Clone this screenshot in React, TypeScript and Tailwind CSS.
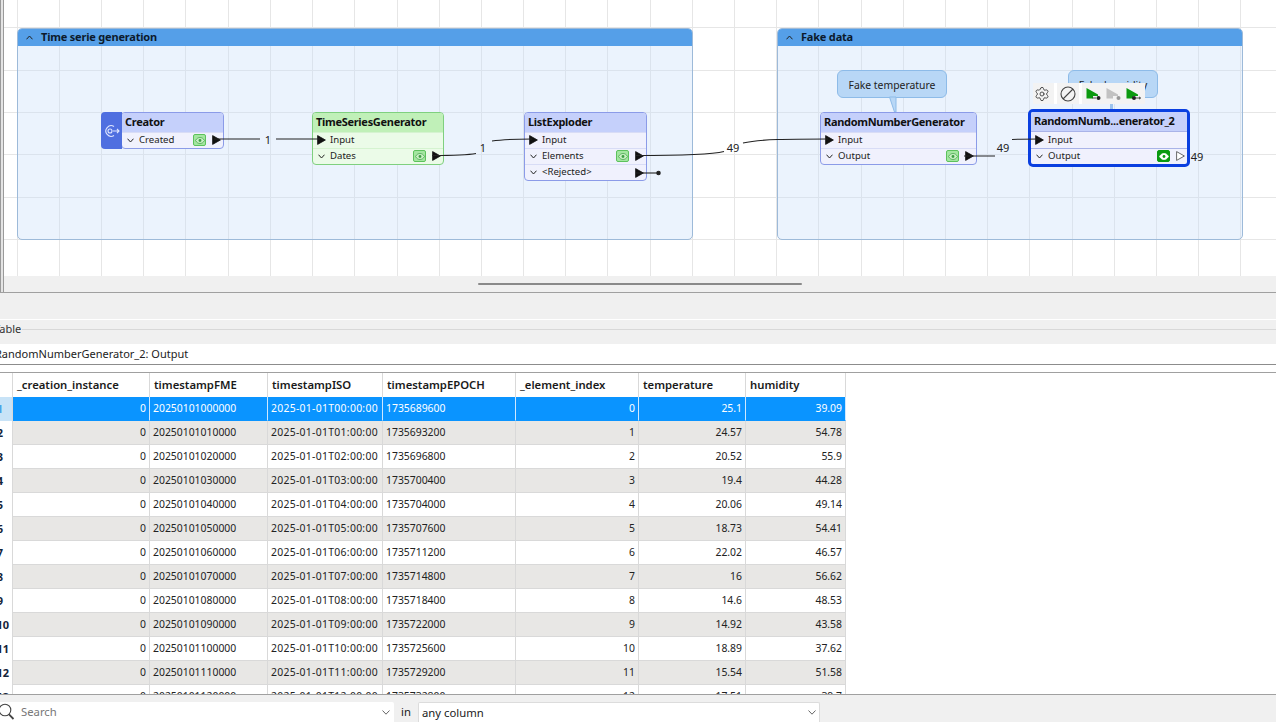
import { Settings } from "lucide-react";

const FONT = "font-['Noto_Sans','Open_Sans',sans-serif]";

const GRID_X = [17, 59, 101, 143, 185, 228, 270, 312, 354, 397, 439, 481, 523, 565, 607, 650, 692, 734, 776, 818, 861, 903, 945, 987, 1029, 1072, 1114, 1156, 1198, 1240];
const GRID_Y = [27, 70, 112, 154, 197, 239];

function Eye({ on }: { on?: boolean }) {
  return (
    <span
      className={`flex h-[12px] w-[13px] items-center justify-center rounded-[2px] border ${
        on ? "border-[#0a9a10] bg-[#0a9a10]" : "border-[#5cc25c] bg-[#a3e6a0]"
      }`}
    >
      <svg width="10" height="7" viewBox="0 0 10 7">
        <path d="M0.5 3.5C2 1 3.5 0.5 5 0.5S8 1 9.5 3.5C8 6 6.5 6.5 5 6.5S2 6 0.5 3.5Z" fill={on ? "#fff" : "#c8f0c4"} stroke={on ? "#fff" : "#3f9f45"} strokeWidth="0.7" />
        <circle cx="5" cy="3.5" r="1.4" fill={on ? "#0a9a10" : "#3f9f45"} />
      </svg>
    </span>
  );
}

function Tri({ hollow }: { hollow?: boolean }) {
  return (
    <svg width="9" height="10" viewBox="0 0 9 10" className="shrink-0">
      <path d="M0.6 0.6L8.4 5L0.6 9.4Z" fill={hollow ? "#fff" : "#111"} stroke={hollow ? "#444" : "#111"} strokeWidth="0.8" />
    </svg>
  );
}

function Chevron({ up }: { up?: boolean }) {
  return (
    <svg width="7" height="5" viewBox="0 0 7 5" className="shrink-0">
      <path d={up ? "M0.5 4.3L3.5 1L6.5 4.3" : "M0.5 0.7L3.5 4L6.5 0.7"} fill="none" stroke="#222" strokeWidth="1" />
    </svg>
  );
}

type Port = { name: string; kind: "input" | "output"; eye?: boolean; on?: boolean; hollow?: boolean };

function Node({
  title,
  x,
  y,
  w,
  ports,
  green,
  selected,
}: {
  title: string;
  x: number;
  y: number;
  w: number;
  ports: Port[];
  green?: boolean;
  selected?: boolean;
}) {
  const border = selected ? "rounded-[5px] border-[3px] border-[#0a3fe0]" : green ? "rounded-[4px] border border-[#7fd07f]" : "rounded-[4px] border border-[#8b9be8]";
  const head = green ? "bg-[#c0f0b8]" : "bg-[#c5d0fb]";
  const body = green ? "bg-[#ebfbe8]" : "bg-[#f0f1fd]";
  const line = green ? "border-[#d5f3d0]" : selected ? "border-[#a9b3e8]" : "border-[#d8dcf6]";
  return (
    <div className={`absolute overflow-hidden ${border} ${body}`} style={{ left: x, top: y, width: w }}>
      <div className={`flex h-[19px] items-center pl-[3px] text-[11px] font-bold tracking-[-0.3px] text-[#111] ${head}`}>{title}</div>
      {ports.map((p, i) => (
        <div
          key={p.name}
          className={`flex items-center border-t text-[9.6px] text-[#222] ${selected ? "h-[16.5px]" : "h-[16px]"} ${!selected && i < 2 ? "pb-px" : ""} ${line}`}
        >
          {p.kind === "input" ? (
            <span className="ml-[4px] flex items-center gap-[4px]">
              <Tri />
              <span>{p.name}</span>
            </span>
          ) : (
            <span className="ml-[5px] flex items-center gap-[5px]">
              <Chevron />
              <span>{p.name}</span>
            </span>
          )}
          {p.kind === "output" && (
            <span className="ml-auto mr-[2px] flex items-center gap-[6px]">
              {p.eye && <Eye on={p.on} />}
              <Tri hollow={p.hollow} />
            </span>
          )}
        </div>
      ))}
    </div>
  );
}

function Bookmark({ title, x, y, w, h }: { title: string; x: number; y: number; w: number; h: number }) {
  return (
    <div
      className="absolute overflow-hidden rounded-[5px] border border-[#9dbad9] bg-[#c6ddf9]/35"
      style={{ left: x, top: y, width: w, height: h }}
    >
      <div className="flex h-[17px] items-center gap-[8px] bg-[#559fe8] pl-[8px] text-[11px] font-bold tracking-[-0.2px] text-[#0c1a2c]">
        <Chevron up />
        {title}
      </div>
    </div>
  );
}

function Annotation({ text, x, y, w }: { text: string; x: number; y: number; w: number }) {
  return (
    <div
      className="absolute flex h-[28px] items-center justify-center overflow-hidden rounded-[6px] border border-[#8dbbe8] bg-[#b8d7f6] pt-[3px] text-[10.4px] text-[#222]"
      style={{ left: x, top: y, width: w }}
    >
      {text}
    </div>
  );
}

function Wires() {
  return (
    <svg className="absolute left-0 top-0" width="1276" height="276" fill="none" stroke="#222" strokeWidth="1.1">
      <path d="M214 139H260M276 139H320" />
      <path d="M432 155.5C455 155.5 468 155 476 153.5M492 141C505 139 515 139 532 139" />
      <path d="M636 155.5C680 155.5 710 155 724 151.5M743 143C760 139 790 139 828 139" />
      <path d="M964 156H995M1012 139.5C1020 139 1030 139 1040 139" />
      <path d="M636 173H658" />
      <circle cx="658.5" cy="173" r="1.7" fill="#222" />
    </svg>
  );
}

function Tails() {
  return (
    <svg className="absolute left-0 top-0" width="1276" height="276">
      <path d="M889.5 97L894.5 112H896V97Z" fill="#b8d7f6" stroke="#8dbbe8" />
      <path d="M1110 104H1113V110H1110Z" fill="#9cc3ee" />
    </svg>
  );
}

function WireLabel({ text, x, y }: { text: string; x: number; y: number }) {
  return (
    <span className="absolute -translate-x-1/2 -translate-y-1/2 text-[11px] leading-none text-[#222]" style={{ left: x, top: y }}>
      {text}
    </span>
  );
}

function RunIcon({ variant, className }: { variant: "out" | "off" | "in"; className: string }) {
  const fill = variant === "off" ? "#c2c2c2" : "#0c9a10";
  const dark = variant === "off" ? "#999" : "#222";
  return (
    <svg width="15" height="12" viewBox="0 0 15 12" className={className}>
      <path d="M0.5 0L12 6.5V8H7V10.5H0.5Z" fill={fill} />
      {variant === "out" && (
        <>
          <path d="M6.5 10H10" stroke={dark} strokeWidth="0.8" />
          <circle cx="12.5" cy="10" r="2" fill={dark} />
        </>
      )}
      {variant === "off" && <circle cx="12.5" cy="10" r="2" fill={dark} />}
      {variant === "in" && (
        <>
          <circle cx="8" cy="10" r="2" fill={dark} />
          <path d="M10 10H14.5M13 8.8L14.5 10L13 11.2" stroke={dark} strokeWidth="0.8" fill="none" />
        </>
      )}
    </svg>
  );
}

function Toolbar() {
  return (
    <div className="absolute flex h-[21px] items-center bg-[#f3f3f3]" style={{ left: 1033, top: 83, width: 112 }}>
      <Settings size={16} strokeWidth={1.4} color="#444" className="ml-[1px]" />
      <span className="ml-[4px] h-[21px] w-[3px] bg-white" />
      <svg width="16" height="16" viewBox="0 0 16 16" fill="none" stroke="#444" strokeWidth="1.1" className="ml-[3px]">
        <circle cx="8" cy="8" r="7" />
        <path d="M3 13L13 3" />
      </svg>
      <span className="ml-[3px] h-[21px] w-[3px] bg-white" />
      <RunIcon variant="out" className="ml-[4px]" />
      <RunIcon variant="off" className="ml-[5px]" />
      <RunIcon variant="in" className="ml-[5px]" />
    </div>
  );
}

const COLUMNS = [
  { name: "_creation_instance", w: 137, right: true },
  { name: "timestampFME", w: 118 },
  { name: "timestampISO", w: 115 },
  { name: "timestampEPOCH", w: 133 },
  { name: "_element_index", w: 123, right: true },
  { name: "temperature", w: 107, right: true },
  { name: "humidity", w: 100, right: true },
];

const MEASURES = [
  ["25.1", "39.09"],
  ["24.57", "54.78"],
  ["20.52", "55.9"],
  ["19.4", "44.28"],
  ["20.06", "49.14"],
  ["18.73", "54.41"],
  ["22.02", "46.57"],
  ["16", "56.62"],
  ["14.6", "48.53"],
  ["14.92", "43.58"],
  ["18.89", "37.62"],
  ["15.54", "51.58"],
  ["17.51", "39.7"],
];

const pad = (n: number) => String(n).padStart(2, "0");

function DataTable() {
  return (
    <div className="h-[321px] overflow-hidden bg-white">
      <div className="flex h-[24px]">
        <div className="w-[13px] shrink-0 border-r border-[#d9d9d9]" />
        {COLUMNS.map((c) => (
          <div
            key={c.name}
            className="flex shrink-0 items-center border-r border-[#d9d9d9] pl-[4px] text-[11.3px] font-semibold text-[#1a1a1a]"
            style={{ width: c.w }}
          >
            {c.name}
          </div>
        ))}
      </div>
      {MEASURES.map(([temp, hum], i) => {
        const values = [
          "0",
          `20250101${pad(i)}0000`,
          `2025-01-01T${pad(i)}:00:00`,
          String(1735689600 + i * 3600),
          String(i),
          temp,
          hum,
        ];
        const selected = i === 0;
        return (
          <div key={i} className="flex h-[24px]">
            <div
              className={`flex w-[13px] shrink-0 items-center justify-end overflow-hidden border-r border-[#d9d9d9] text-[11px] font-bold ${
                i + 1 < 10 ? "pr-[9px]" : "pr-[3px]"
              } ${selected ? "bg-[#c8e3f7] text-[#4ba3e8]" : "bg-white text-[#14243a]"}`}
            >
              <span>{i + 1}</span>
            </div>
            {COLUMNS.map((c, j) => (
              <div
                key={c.name}
                className={`flex shrink-0 items-center whitespace-nowrap border-b border-r px-[3px] text-[10.4px] ${c.right ? "justify-end" : ""} ${
                  j === 2 ? "tracking-[0.3px]" : ""
                } ${
                  selected
                    ? "border-b-[#0a94ff] border-r-[#cfe8ff] bg-[#0a94ff] text-white"
                    : `border-[#d9d9d9] text-[#222] ${i % 2 === 1 ? "bg-[#e8e7e5]" : "bg-white"}`
                }`}
                style={{ width: c.w }}
              >
                {values[j]}
              </div>
            ))}
          </div>
        );
      })}
    </div>
  );
}

function Caret() {
  return (
    <svg width="8" height="5" viewBox="0 0 8 5" className="shrink-0">
      <path d="M0.5 0.5L4 4.2L7.5 0.5" fill="none" stroke="#666" strokeWidth="1" />
    </svg>
  );
}

function SearchBar() {
  return (
    <div className="flex h-[28px] items-end border-t border-[#a0a0a0] bg-[#f0f0f0] text-[11.3px]">
      <div className="flex h-[20px] w-[394px] items-center rounded-tr-[2px] bg-white pr-[4px]">
        <svg width="18" height="18" viewBox="0 0 18 18" fill="none" stroke="#444" strokeWidth="1.1" className="-ml-[2px] shrink-0">
          <circle cx="7" cy="7" r="5.8" />
          <path d="M11 11.4L15.5 16" strokeWidth="1.8" />
        </svg>
        <span className="ml-[5px] pt-px text-[#777]">Search</span>
        <span className="ml-auto flex">
          <Caret />
        </span>
      </div>
      <span className="flex h-[20px] w-[24px] items-center justify-center pt-px text-[#222]">in</span>
      <div className="flex h-[20px] w-[402px] items-center rounded-t-[2px] border-x border-t border-[#dcdcdc] bg-white pl-[3px] pr-[3px] text-[#222]">
        <span className="pt-px">any column</span>
        <span className="ml-auto flex">
          <Caret />
        </span>
      </div>
    </div>
  );
}

export default function App() {
  return (
    <div className={`flex h-[722px] w-[1276px] flex-col overflow-hidden bg-[#f0f0f0] ${FONT}`}>
      <div className="flex h-[293px] shrink-0 border-b border-[#a0a0a0]">
        <div className="w-[4px] shrink-0 border-x border-[#9a9a9a] bg-[#e4e4e4]" />
        <div className="flex min-w-0 flex-1 flex-col">
          <div className="relative h-[276px] overflow-hidden bg-white">
            <div className="absolute -left-[4px] top-0 h-[276px] w-[1276px]">
              {GRID_X.map((x) => (
                <div key={x} className="absolute top-0 h-[276px] w-px bg-[#e6e6e6]" style={{ left: x }} />
              ))}
              {GRID_Y.map((y) => (
                <div key={y} className="absolute left-0 h-px w-[1276px] bg-[#e6e6e6]" style={{ top: y }} />
              ))}
              <Bookmark title="Time serie generation" x={17} y={28} w={676} h={212} />
              <Bookmark title="Fake data" x={777} y={28} w={466} h={212} />
              <Annotation text="Fake temperature" x={837} y={70} w={110} />
              <Annotation text="Fake humidity" x={1068} y={70} w={90} />
              <Tails />
              <Node title="Creator" x={121} y={112} w={103} ports={[{ name: "Created", kind: "output", eye: true }]} />
              <div className="absolute flex h-[37px] w-[21px] items-center justify-center rounded-l-[4px] bg-[#4f6fe0]" style={{ left: 101, top: 112 }}>
                <svg width="16" height="14" viewBox="0 0 16 14" fill="none" stroke="#dfe6ff" strokeWidth="1.1">
                  <path d="M10 2.5A5.3 5.3 0 1 0 10 11.5" />
                  <circle cx="6" cy="7" r="2" />
                  <path d="M9 7H15M13 5L15 7L13 9" />
                </svg>
              </div>
              <Node
                title="TimeSeriesGenerator"
                x={312}
                y={112}
                w={132}
                green
                ports={[
                  { name: "Input", kind: "input" },
                  { name: "Dates", kind: "output", eye: true },
                ]}
              />
              <Node
                title="ListExploder"
                x={524}
                y={112}
                w={123}
                ports={[
                  { name: "Input", kind: "input" },
                  { name: "Elements", kind: "output", eye: true },
                  { name: "<Rejected>", kind: "output" },
                ]}
              />
              <Node
                title="RandomNumberGenerator"
                x={820}
                y={112}
                w={157}
                ports={[
                  { name: "Input", kind: "input" },
                  { name: "Output", kind: "output", eye: true },
                ]}
              />
              <Node
                title="RandomNumb...enerator_2"
                x={1028}
                y={109}
                w={162}
                selected
                ports={[
                  { name: "Input", kind: "input" },
                  { name: "Output", kind: "output", eye: true, on: true, hollow: true },
                ]}
              />
              <Wires />
              <Toolbar />
              <WireLabel text="1" x={268} y={139} />
              <WireLabel text="1" x={483} y={147} />
              <WireLabel text="49" x={733} y={147} />
              <WireLabel text="49" x={1003} y={147} />
              <WireLabel text="49" x={1197} y={156} />
            </div>
          </div>
          <div className="flex h-[16px] items-center pl-[474px]">
            <div className="h-[2px] w-[324px] rounded-full bg-[#8a8a8a]" />
          </div>
        </div>
      </div>
      <div className="h-[27px] shrink-0 border-b border-white" />
      <div className="flex h-[24px] shrink-0 items-center gap-[1px] pb-[6px] text-[11px] text-[#333]">
        <span className="-ml-[6px]">Table</span>
        <span className="h-px flex-1 bg-[#d8d8d8]" />
      </div>
      <div className="flex h-[21px] shrink-0 items-center overflow-hidden border-b border-[#8c8c8c] bg-white text-[11px] text-[#222]">
        <span className="-ml-[5px] whitespace-nowrap">RandomNumberGenerator_2: Output</span>
      </div>
      <div className="h-[8px] shrink-0 border-b border-[#a0a0a0] bg-white" />
      <DataTable />
      <SearchBar />
    </div>
  );
}
